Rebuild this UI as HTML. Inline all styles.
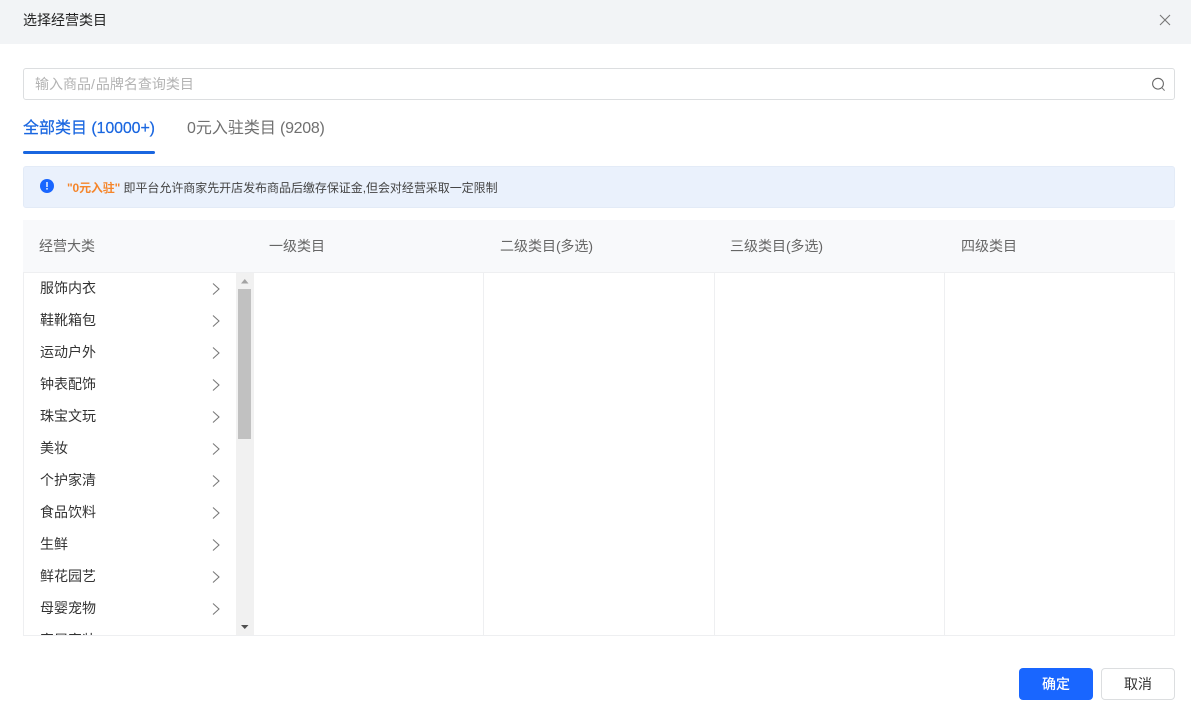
<!DOCTYPE html>
<html lang="zh">
<head>
<meta charset="utf-8">
<title>选择经营类目</title>
<style>
html,body{margin:0;padding:0;background:#fff}
body{width:1191px;height:720px;overflow:hidden;position:relative;font-family:"Liberation Sans","Noto Sans CJK SC",sans-serif;font-size:14px;color:#333}
.a{position:absolute;box-sizing:border-box;white-space:nowrap}
.item{left:40px;width:56px;height:32px;line-height:32px;color:#333;overflow:hidden}
.th{top:220px;height:52px;line-height:52px;color:#666}
.vl{top:272px;width:1px;height:363px;background:#eeeff1}
.p{letter-spacing:-.25px}
</style>
</head>
<body>
<div class="a" style="left:0;top:0;width:1191px;height:44px;background:#f2f4f6"></div>
<div class="a" style="left:23px;top:0;height:40px;line-height:40px;color:#222">选择经营类目</div>
<svg class="a" style="left:1158px;top:13px" width="14" height="14" viewBox="0 0 14 14"><path d="M2 2L12 12M12 2L2 12" stroke="#777" stroke-width="1.1" fill="none"/></svg>

<div class="a" style="left:23px;top:68px;width:1152px;height:32px;border:1px solid #dcdee0;border-radius:3px;background:#fff"></div>
<div class="a" style="left:35px;top:68px;height:32px;line-height:32px;color:#b3b3b3">输入商品<span style="letter-spacing:1px">/</span>品牌名查询类目</div>
<svg class="a" style="left:1151px;top:77px" width="16" height="16" viewBox="0 0 16 16"><circle cx="7" cy="6.7" r="5.4" stroke="#666" stroke-width="1.05" fill="none"/><path d="M11 10.8L13.6 13.6" stroke="#777" stroke-width="1" fill="none"/></svg>

<div class="a" style="left:23px;top:117px;height:24px;line-height:24px;font-size:16px;color:#1966e0;-webkit-text-stroke:.2px #1966e0">全部类目<span style="letter-spacing:-.12px"> (10000+)</span></div>
<div class="a" style="left:23px;top:151px;width:132px;height:3px;background:#1966e0;border-radius:2px"></div>
<div class="a" style="left:187px;top:117px;height:24px;line-height:24px;font-size:16px;color:#707070">0元入驻类目<span style="letter-spacing:-.3px"> (9208)</span></div>

<div class="a" style="left:23px;top:166px;width:1152px;height:42px;background:#eaf1fc;border:1px solid #e3ebf7;border-radius:3px"></div>
<svg class="a" style="left:40px;top:179px" width="14" height="14" viewBox="0 0 14 14"><circle cx="7" cy="7" r="7" fill="#1966ff"/><rect x="6.3" y="3" width="1.4" height="5" fill="#fff"/><rect x="6.3" y="9" width="1.4" height="1.6" fill="#fff"/></svg>
<div class="a" style="left:67px;top:179px;height:18px;line-height:18px;font-size:12px;color:#444"><b style="color:#f5852a;letter-spacing:-.15px">"0元入驻"</b> <span style="letter-spacing:-.04px">即平台允许商家先开店发布商品后缴存保证金,但会对经营采取一定限制</span></div>

<div class="a" style="left:23px;top:220px;width:1152px;height:53px;background:#f8f9fb;border-bottom:1px solid #eeeff1"></div>
<div class="a th" style="left:39px">经营大类</div>
<div class="a th" style="left:269px">一级类目</div>
<div class="a th" style="left:500px">二级类目<span class="p">(</span>多选<span class="p">)</span></div>
<div class="a th" style="left:730px">三级类目<span class="p">(</span>多选<span class="p">)</span></div>
<div class="a th" style="left:961px">四级类目</div>

<div class="a vl" style="left:23px"></div>
<div class="a vl" style="left:483px"></div>
<div class="a vl" style="left:714px"></div>
<div class="a vl" style="left:944px"></div>
<div class="a vl" style="left:1174px"></div>
<div class="a" style="left:23px;top:635px;width:1152px;height:1px;background:#eeeff1"></div>

<div class="a item" style="top:272px">服饰内衣</div>
<div class="a item" style="top:304px">鞋靴箱包</div>
<div class="a item" style="top:336px">运动户外</div>
<div class="a item" style="top:368px">钟表配饰</div>
<div class="a item" style="top:400px">珠宝文玩</div>
<div class="a item" style="top:432px">美妆</div>
<div class="a item" style="top:464px">个护家清</div>
<div class="a item" style="top:496px">食品饮料</div>
<div class="a item" style="top:528px">生鲜</div>
<div class="a item" style="top:560px">鲜花园艺</div>
<div class="a item" style="top:592px">母婴宠物</div>
<div class="a item" style="top:624px;height:11px">家居家装</div>

<svg class="a" style="left:0;top:0;pointer-events:none" width="260" height="640" viewBox="0 0 260 640" fill="none" stroke="#777" stroke-width="1.05">
<path d="M213 283.5L219 289L213 294.5"/>
<path d="M213 315.5L219 321L213 326.5"/>
<path d="M213 347.5L219 353L213 358.5"/>
<path d="M213 379.5L219 385L213 390.5"/>
<path d="M213 411.5L219 417L213 422.5"/>
<path d="M213 443.5L219 449L213 454.5"/>
<path d="M213 475.5L219 481L213 486.5"/>
<path d="M213 507.5L219 513L213 518.5"/>
<path d="M213 539.5L219 545L213 550.5"/>
<path d="M213 571.5L219 577L213 582.5"/>
<path d="M213 603.5L219 609L213 614.5"/>
</svg>

<div class="a" style="left:236px;top:273px;width:18px;height:362px;background:#f1f1f1"></div>
<div class="a" style="left:238px;top:289px;width:13px;height:150px;background:#c1c1c1"></div>
<svg class="a" style="left:236px;top:273px" width="18" height="362" viewBox="0 0 18 362"><path d="M5 10.5L8.8 6L12.5 10.5Z" fill="#a3a3a3"/><path d="M5 352L12.5 352L8.8 356Z" fill="#505050"/></svg>

<div class="a" style="left:1019px;top:668px;width:74px;height:32px;line-height:32px;text-align:center;background:#1966ff;border-radius:4px;color:#fff;font-weight:500">确定</div>
<div class="a" style="left:1101px;top:668px;width:74px;height:32px;line-height:30px;text-align:center;background:#fff;border:1px solid #dcdee0;border-radius:4px;color:#333">取消</div>
</body>
</html>
